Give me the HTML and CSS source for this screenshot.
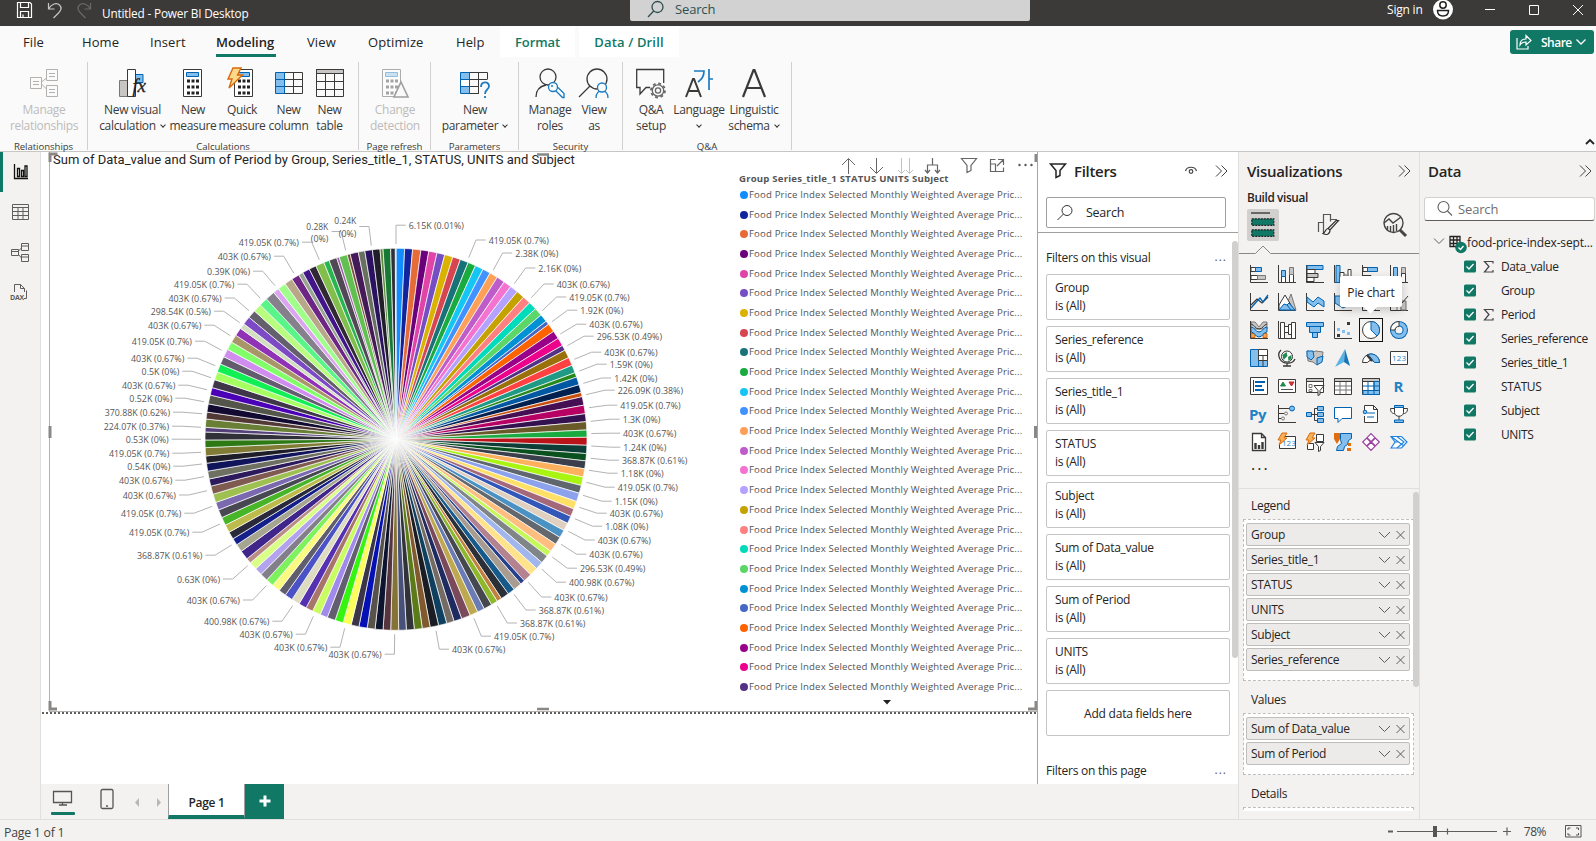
FILE: index.html
```html
<!DOCTYPE html>
<html lang="en">
<head>
<meta charset="utf-8">
<title>Untitled - Power BI Desktop</title>
<link rel="stylesheet" href="styles.css">
</head>
<body>
<header class="titlebar">
  <svg class="quick-icons" width="82" height="26" fill="none" stroke="#fff" stroke-width="1.2">
    <path d="M1.5 2.5h12.500l1.500 1.500v13.500h-14zM4.500 2.500v5h8v-5M4.500 17.500v-6h8v6M7 14.500v3"/>
    <path stroke="#c8c6c4" d="M32.500 3v6h6M32.500 9c3-5 8-7 11-4s1 6-1 8l-5 5"/>
    <path stroke="#6b6967" d="M74.500 3v6h-6M74.500 9c-3-5-8-7-11-4s-1 6 1 8l5 5"/>
  </svg>
  <span class="app-title">Untitled - Power BI Desktop</span>
  <div class="global-search">
    <svg width="17" height="19" fill="none" stroke="#2f4f4f" stroke-width="1.300"><circle cx="10.500" cy="7" r="5.500"/><path d="M6.700 11L1 17"/></svg>
    <span>Search</span>
  </div>
  <span class="signin">Sign in</span>
  <svg class="avatar" width="20" height="26"><circle cx="10" cy="9.500" r="10" fill="#fff"/><circle cx="10" cy="5" r="3.200" fill="none" stroke="#222" stroke-width="1.500"/><path d="M4.500 10.500h11c0 4-2.500 5.500-5.500 5.500s-5.500-1.500-5.500-5.500z" fill="none" stroke="#222" stroke-width="1.500"/></svg>
  <svg class="window-buttons" width="100" height="26" fill="none" stroke="#fff"><path d="M1 9.500h10M45.500 5.500h9v9h-9zM89 5l10 10M99 5l-10 10"/></svg>
</header>

<nav class="tabs">
  <span class="tab" style="width:40px">File</span>
  <span class="tab" style="width:72px">Home</span>
  <span class="tab" style="width:61px">Insert</span>
  <span class="tab active" style="width:97px">Modeling</span>
  <span class="tab" style="width:55px">View</span>
  <span class="tab" style="width:92px">Optimize</span>
  <span class="tab" style="width:55px">Help</span>
  <span class="tab contextual format">Format</span>
  <span class="tab contextual drill">Data / Drill</span>
  <button class="share"><svg width="16" height="16" fill="none" stroke="#fff" stroke-width="1.200"><path d="M1 4v11h11v-3M4 11c0-5 3-6 6-6V1.500l5 5-5 4.500V8C7.500 8 5.500 8.500 4 11z"/></svg><span>Share</span><svg width="10" height="6" fill="none" stroke="#fff" stroke-width="1.300"><path d="M.5.5L5 5 9.500.5"/></svg></button>
</nav>

<section class="ribbon">
  <div class="group" style="width:88px">
    <div class="commands">
      <div class="cmd off" style="width:88px"><svg width="30" height="30" fill="none" stroke="#b3b0ad"><path d="M1.500 9.500h11v11h-11zM17.500 1.500h11v11h-11zM17.500 17.500h11v11h-11zM4 13.500h6M4 16.500h6M20 5.500h6M20 8.500h6M20 21.500h6M20 24.500h6M12.500 14l5-4M12.500 16l5 5"/></svg><span>Manage</span><span>relationships</span></div>
    </div><div class="group-name">Relationships</div>
  </div>
  <div class="group" style="width:271px">
    <div class="commands calc">
      <div class="cmd" style="width:71px"><svg width="30" height="30"><path d="M1.500 12.500h8v16h-8z" fill="#c8c6c4" stroke="#777"/><path d="M17 6.500h8v8h-8z" fill="#83beec" stroke="#0063b1"/><path d="M9.500 1.500h8v27h-8z" fill="#fff" stroke="#3b3a39"/><text x="14.500" y="24" class="fx">fx</text></svg><span>New visual</span><span>calculation<i class="caret"></i></span></div>
      <div class="cmd" style="width:50px"><svg width="20" height="30"><use href="#calculator"/></svg><span>New</span><span>measure</span></div>
      <div class="cmd" style="width:48px"><svg width="30" height="30"><use href="#calculator" x="7"/><path d="M6 0h8l-3.500 7h5L2 20l3-9H1z" fill="#fcd98a" stroke="#d96a0b" stroke-width="1.400"/></svg><span>Quick</span><span>measure</span></div>
      <div class="cmd" style="width:45px"><svg width="30" height="30" fill="none"><path d="M1.500 4.500h9v21h-9z" fill="#83beec"/><path d="M10 4.500h18.500v21H10M10 11.500h18M10 18.500h18M19.500 4.500v21" stroke="#3b3a39"/><path d="M1.500 4.500h9v21h-9zM1.500 11.500h9M1.500 18.500h9" stroke="#0063b1"/></svg><span>New</span><span>column</span></div>
      <div class="cmd" style="width:37px"><svg width="30" height="30" fill="none" stroke="#3b3a39"><path d="M1.500 1.500h27v4h-27z" fill="#c8c6c4"/><path d="M1.500 1.500h27v27h-27zM1.500 13.500h27M1.500 21.500h27M10.500 5.500v23M19.500 5.500v23"/></svg><span>New</span><span>table</span></div>
    </div><div class="group-name">Calculations</div>
  </div>
  <div class="group" style="width:72px">
    <div class="commands">
      <div class="cmd off" style="width:72px"><svg width="26" height="30"><g opacity=".4"><use href="#calculator"/></g><path d="M19 14l7 15H12z" fill="#fafafa" stroke="#a19f9d" stroke-width="1.600"/></svg><span>Change</span><span>detection</span></div>
    </div><div class="group-name">Page refresh</div>
  </div>
  <div class="group" style="width:88px">
    <div class="commands">
      <div class="cmd" style="width:88px"><svg width="30" height="30" fill="none"><path d="M.5 4.500h9v21h-9z" fill="#83beec"/><path d="M9 4.500h18.500v7M9 11.500h18M9 18.500h9M9 25.500h10M18.500 4.500v21" stroke="#3b3a39"/><path fill="#fff" d="M1 12h8v6H1z"/><path d="M.5 4.500h9v21h-9zM.5 11.500h9M.5 18.500h9" stroke="#0063b1"/><path d="M21 19c0-6 8-6 8-1 0 4-4 3-4 8M25 28v2" stroke="#1a7bc0" stroke-width="1.800"/></svg><span>New</span><span>parameter<i class="caret"></i></span></div>
    </div><div class="group-name">Parameters</div>
  </div>
  <div class="group" style="width:104px">
    <div class="commands security">
      <div class="cmd" style="width:48px"><svg width="30" height="30" fill="none" stroke="#3b3a39" stroke-width="1.300"><circle cx="13" cy="9" r="8"/><path d="M1 29c0-8 5-11 10-12"/><g stroke="#1a7bc0" fill="#fafafa"><path d="M20.500 22.500l7 7h1.500v-4l-6-6"/><circle cx="18" cy="19" r="4.500"/></g><circle cx="17" cy="18" r="1" fill="#1a7bc0" stroke="none"/></svg><span>Manage</span><span>roles</span></div>
      <div class="cmd" style="width:40px"><svg width="32" height="30" fill="none" stroke="#3b3a39" stroke-width="1.300"><circle cx="19" cy="11" r="10"/><path d="M12 18L1 29"/><g stroke="#1a7bc0" fill="#fafafa"><path d="M18 30c0-10 12-10 12 0"/><circle cx="24" cy="19.500" r="4.500"/></g></svg><span>View</span><span>as</span></div>
    </div><div class="group-name">Security</div>
  </div>
  <div class="group" style="width:169px">
    <div class="commands qna">
      <div class="cmd" style="width:46px"><svg width="30" height="30" fill="none" stroke="#3b3a39" stroke-width="1.300"><path d="M14 19.500l-4 0-6 6.500v-6.500H.7V1.500h27V15"/><circle cx="22" cy="22.500" r="2.600" stroke="#666"/><circle cx="22" cy="22.500" r="5.700" stroke="#666"/><circle cx="22" cy="22.500" r="7" stroke="#666" stroke-dasharray="2.800 2.700" stroke-width="1.800"/></svg><span>Q&amp;A</span><span>setup</span></div>
      <div class="cmd" style="width:50px"><svg width="30" height="30" fill="none" stroke-width="1.700"><path d="M2 29L9 11h1l7 18M5 23h9" stroke="#3b3a39" stroke-width="2"/><path d="M10 3h10c0 6-3 9-6 11M25 1v21M25 11h4" stroke="#1a7bc0"/></svg><span>Language</span><span><i class="caret solo"></i></span></div>
      <div class="cmd" style="width:60px"><svg width="26" height="30" fill="none" stroke="#3b3a39" stroke-width="2.200"><path d="M2 29L12.500 2h1L24 29M6 20h14"/></svg><span>Linguistic</span><span>schema<i class="caret"></i></span></div>
    </div><div class="group-name">Q&amp;A</div>
  </div>
  <svg class="collapse" width="10" height="7" fill="none" stroke="#222" stroke-width="1.800"><path d="M1 6l4-4 4 4"/></svg>
</section>

<main class="workspace">
  <aside class="rail">
    <div class="rail-item current"><svg width="16" height="16" fill="none" stroke="#111" stroke-width="1.300"><path d="M1.500 0v14.500H15M4.500 4.500h2v8h-2zM8.500 6.500h2v6h-2zM12 2h2v10.500h-2z"/></svg></div>
    <div class="rail-item"><svg width="17" height="16" fill="none" stroke="#605e5c"><path d="M.5.5h16v15H.5zM.5 3.500h16M.5 7.500h16M.5 11.500h16M6 3.500v12M11 3.500v12"/></svg></div>
    <div class="rail-item"><svg width="19" height="19" fill="none" stroke="#605e5c"><path d="M.5 6.500h7v6h-7zM10.500.5h7v7h-7zM10.500 11.500h7v7h-7zM.5 8.500h7M10.500 3h7M10.500 14h7M7.500 8l3-3M7.500 11.500L10.500 15"/></svg></div>
    <div class="rail-item"><svg width="20" height="17" fill="none" stroke="#605e5c"><path d="M4.500 8V.5h6l4 4V8M10.500.5v4h4M14 14.500h2.500V6.500"/><text x="0" y="15.500" class="dax">DAX</text></svg></div>
  </aside>

  <section class="stage">
    <div class="page">
      <div class="visual">
        <svg id="pie" class="pie" width="685" height="558" viewBox="50 153 685 558"></svg>
        <div class="legend"><div class="legend-title">Group Series_title_1 STATUS UNITS Subject</div><div id="legend-rows"></div></div>
        <div class="visual-title">Sum of Data_value and Sum of Period by Group, Series_title_1, STATUS, UNITS and Subject</div>
        <svg class="visual-header" width="204" height="23" fill="none" stroke="#666"><path d="M14.500 21V6M8 12l6.500-6.500L21 12M42.500 5v15M36 14l6.500 6.500L49 14"/><path stroke="#c4c2c0" d="M67.500 5v15M64 17l3.500 3.500L71 17M75.500 5v15M72 17l3.500 3.500L79 17"/><path d="M98.500 5v7M93.500 20v-8h10v8M91 17l2.500 3 2.500-3M101 17l2.500 3 2.500-3M127.500 5.500h15l-5.500 7v5l-4 2v-7zM156.500 11v7.500h13v-4M156.500 11h5v7M156.500 11V6.500h5M164 6.500h5.500V12M169 7l-6 6" stroke-width="1.200"/><g fill="#555" stroke="none"><circle cx="185.500" cy="12" r="1.200"/><circle cx="191.500" cy="12" r="1.200"/><circle cx="197.500" cy="12" r="1.200"/></g></svg>
        <svg class="more-below" width="8" height="5"><path d="M0 0h8L4 4.500z" fill="#222"/></svg>
        <svg class="handles" width="990" height="561" fill="none" stroke="#8a8886" stroke-width="3"><path d="M9.500 2H2v8M2 549v8h7M980 557h8v-8M988 2v8M2 274v12M987.500 274v12"/><path d="M489 2.500h12M489 557h12" stroke-width="2.500"/></svg>
      </div>
    </div>
    <div class="pagebar">
      <svg class="device" width="110" height="35" fill="none" stroke="#555" stroke-width="1.300"><path d="M12.500 7.500h18v11h-18zM18 21h8M21.500 18v3"/><rect x="60" y="5.500" width="12" height="19" rx="1.500"/><path d="M65 22h2"/></svg>
      <svg class="nav-arrows" width="30" height="10" fill="#b9b7b5"><path d="M5 1v9L1 5.500zM23 1v9l4-4.500z"/></svg>
      <div class="page-tab">Page 1</div>
      <div class="add-page"><svg width="12" height="12" stroke="#fff" stroke-width="3"><path d="M6 .5v11M.5 6h11"/></svg></div>
    </div>
  </section>

  <aside class="filters">
    <div class="filters-body">
      <div class="pane-head"><svg width="18" height="16" fill="none" stroke="#252423" stroke-width="1.500"><path d="M.5 1h15l-5.500 6.500v5L6 14.500v-7z"/></svg><b>Filters</b><svg class="eye" width="12" height="9" fill="none" stroke="#444" stroke-width="1.200"><path d="M.5 5C2 0 10 0 11.500 5"/><circle cx="6" cy="5.500" r="1.800"/></svg><svg width="13" height="12" fill="none" stroke="#444"><path d="M1 .5L6.500 6 1 11.500M6.500.5L12 6l-5.500 5.500"/></svg></div>
      <div class="filter-search"><svg width="16" height="16" fill="none" stroke="#333"><circle cx="10" cy="5.500" r="5"/><path d="M6.500 9L.5 15"/></svg><span>Search</span></div>
      <div class="filter-section"><span>Filters on this visual</span><span class="dots">...</span></div>
      <div id="filter-cards" class="cards"></div>
      <div class="filter-section last"><span>Filters on this page</span><span class="dots">...</span></div>
      <div class="scroll-thumb"></div>
    </div>
  </aside>

  <aside class="viz">
    <div class="pane-head"><b>Visualizations</b><svg width="13" height="12" fill="none" stroke="#444"><path d="M1 .5L6.500 6 1 11.500M6.500.5L12 6l-5.500 5.500"/></svg></div>
    <div class="build-label">Build visual</div>
    <div class="modes">
      <div class="mode selected"><svg width="24" height="26" fill="#117865"><path d="M0 1h19" stroke="#222" stroke-width="1.200"/><path d="M.8 6.800h22v6.500h-22zM.8 17.800h22v6.500h-22z" stroke="#222" stroke-width="1.200" stroke-dasharray="2 1"/></svg></div>
      <div class="mode"><svg width="24" height="26" fill="none" stroke="#555" stroke-width="1.200"><path d="M1.500 20V10.500h5V22M6.500 14V2.500h7v7M13.500 7.500h6v2"/><path d="M21.500 8.500L13 18l-2-1.500 8-8zM11 16.500c-3 0-2 4-5 5 3 2 7 1 7-3.500" fill="#f3f2f1" stroke="#333"/></svg></div>
      <div class="mode"><svg width="26" height="26" fill="none" stroke="#444" stroke-width="1.400"><circle cx="11.500" cy="11" r="9.500"/><path d="M2 11l5-4 4 4 8-6M5.500 18v-4M8.500 20v-6M11.500 20v-7M14.500 19v-7"/><path d="M18 18l6 6" stroke-width="3"/></svg></div>
    </div>
    <svg class="notch" width="180" height="9" fill="none" stroke="#8a8886"><path d="M0 8.500h16.500L24 1l7.500 7.500H180"/></svg>
    <div id="gallery" class="gallery"></div>
    <div class="gallery-more">...</div>
    <div class="tooltip">Pie chart</div>
    <div class="wells">
      <div class="well-name">Legend</div>
      <div class="well" id="well-legend"></div>
      <div class="well-name">Values</div>
      <div class="well" id="well-values"></div>
      <div class="well-name">Details</div>
      <div class="well empty"></div>
      <div class="scroll-thumb"></div>
    </div>
  </aside>

  <aside class="data">
    <div class="pane-head"><b>Data</b><svg width="13" height="12" fill="none" stroke="#444"><path d="M1 .5L6.500 6 1 11.500M6.500.5L12 6l-5.500 5.500"/></svg></div>
    <div class="data-search"><svg width="16" height="16" fill="none" stroke="#605e5c" stroke-width="1.100"><circle cx="6.500" cy="6" r="5.500"/><path d="M10.500 10l4.500 4.500"/></svg><span>Search</span></div>
    <div class="table-row"><svg width="32" height="20" fill="none" stroke="#605e5c"><path d="M1 5.500l5 5 5-5"/><path stroke="#252423" stroke-width="1.300" d="M17 3.500h10v10H17zM20.500 3.500v10M24 3.500v10M17 7h10M17 10.500h10"/><circle cx="28" cy="14.500" r="5.800" fill="#117865" stroke="none"/><path d="M25.500 14.500l2 2 3-3.500" stroke="#fff" stroke-width="1.300"/></svg><span>food-price-index-sept...</span></div>
    <div id="fields"></div>
  </aside>
</main>

<footer class="statusbar">
  <span>Page 1 of 1</span>
  <svg class="zoom" width="126" height="18" fill="none" stroke="#605e5c"><path d="M1 9.500h5" stroke-width="2"/><path d="M10 9.500h100M60.500 6.500v6M116 9.500h8M120 5.500v8" stroke-width="1.200"/><path d="M46 4h4v11h-4z" fill="#555" stroke="none"/></svg>
  <span class="percent">78%</span>
  <svg width="17" height="14" fill="none" stroke="#555"><path d="M.5 1.500h15.500v11.500H.5zM3 6V4h2.500M11 4h2.500v2M13.500 9v2H11M5.500 11H3V9"/></svg>
</footer>

<svg class="defs" width="0" height="0"><defs><g id="calculator"><path d="M.5 1.500h18v27h-18z" fill="#fff" stroke="#3b3a39"/><path d="M3.500 4.500h12v4h-12z" fill="#83beec" stroke="#0063b1"/><path d="M4 13h12M4 19h12M4 25h12" stroke="#222" stroke-width="3" stroke-dasharray="3 1.500"/></g></defs></svg>
<script src="app.js"></script>
</body>
</html>
```
FILE: styles.css
```css
* { box-sizing: border-box; }
body { margin: 0; width: 1596px; height: 841px; overflow: hidden; display: flex; flex-direction: column; font: 12px/16px "Open Sans", "Noto Sans", sans-serif; letter-spacing: -.3px; color: #252423; background: #f3f2f1; }
svg { display: block; flex: none; overflow: visible; }
.defs { position: absolute; }
b { font-weight: 600; }

.titlebar { height: 26px; flex: none; background: #3b3a38; color: #fff; display: flex; align-items: center; }
.quick-icons { margin-left: 16px; }
.app-title { margin-left: 4px; width: 528px; font-size: 11.800px; letter-spacing: -.18px; padding-bottom: 1px; }
.global-search { width: 400px; height: 21px; align-self: flex-start; background: #d2d2d2; border-radius: 0 0 2px 2px; color: #2f5050; display: flex; align-items: flex-start; padding-left: 17px; gap: 11px; font-size: 13px; line-height: 19px; letter-spacing: -.15px; }
.signin { margin-left: 357px; width: 36px; line-height: 20px; align-self: flex-start; white-space: nowrap; letter-spacing: -.2px; }
.avatar { margin-left: 10px; }
.window-buttons { margin-left: 31px; }

.tabs { height: 31px; flex: none; background: #fafafa; display: flex; font-size: 13px; line-height: 33px; padding-left: 23px; }
.tab { flex: none; white-space: nowrap; letter-spacing: .1px; }
.tab:nth-child(1) { margin-right: 19px; }
.tab:nth-child(2) { margin-right: -4px; }
.tab:nth-child(3) { margin-right: 5px; }
.tab:nth-child(4) { margin-right: -6px; }
.tab:nth-child(5) { margin-right: 6px; }
.tab:nth-child(6) { margin-right: -4px; }
.tab:nth-child(7) { margin-right: -11px; }
.tab.active { font-weight: 600; letter-spacing: 0; position: relative; }
.tab.active::after { content: ""; position: absolute; left: 0; bottom: 0; width: 60px; height: 3px; background: #117865; }
.contextual { background: #fff; color: #117865; font-weight: 600; text-align: center; letter-spacing: -.1px; }
.format { width: 75px; margin-right: 4px; }
.drill { width: 100px; letter-spacing: .15px; }
.share { margin: 4px 2px 0 auto; width: 84px; height: 24px; border: 0; border-radius: 3px; background: #117865; color: #fff; display: flex; align-items: center; padding: 0 8px 0 6px; font: 600 12px/24px "Open Sans", sans-serif; letter-spacing: -.5px; }
.share span { margin: 1px auto 0 9px; }

.ribbon { height: 95px; flex: none; background: #fafafa; display: flex; padding-top: 5px; border-bottom: 1px solid #c8c6c4; position: relative; z-index: 2; }
.group { flex: none; border-right: 1px solid #d2d0ce; height: 88px; position: relative; }
.commands { display: flex; height: 76px; padding-top: 6px; }
.calc { padding-left: 9px; }
.security { padding-left: 7px; }
.qna { padding-left: 5px; }
.cmd { flex: none; display: flex; flex-direction: column; align-items: center; white-space: nowrap; color: #3b3a39; letter-spacing: -.32px; }
.cmd svg { margin-bottom: 4px; }
.cmd.off { color: #bdbbb9; }
.fx { font: italic 400 19px "Liberation Serif", serif; fill: #222; stroke: #222; stroke-width: .3; }
.caret { display: inline-block; width: 4px; height: 4px; border: solid #333; border-width: 0 1.500px 1.500px 0; transform: rotate(45deg); margin: 0 1px 3px 5px; }
.caret.solo { margin: 0 0 3px; }
.group-name { font-size: 9.600px; line-height: 15px; text-align: center; color: #3b3a39; letter-spacing: -.05px; padding-top: 1px; }
.collapse { position: absolute; right: 1px; bottom: 6px; }

.workspace { flex: 1; min-height: 0; display: flex; }
.rail { width: 41px; flex: none; border-right: 1px solid #e1dfdd; }
.rail-item { height: 40px; display: flex; align-items: center; justify-content: center; }
.rail-item.current { border-left: 3px solid #117865; padding-right: 2px; }
.dax { font: 700 7px "Open Sans", sans-serif; fill: #605e5c; stroke: none; }

.stage { width: 996px; flex: none; display: flex; flex-direction: column; }
.page { height: 632px; background: #fff; padding-left: 8px; position: relative; }
.page::after { content: ""; position: absolute; left: 1px; top: 560px; width: 995px; height: 2px; background: repeating-linear-gradient(90deg, #605e5c 0 2px, transparent 2px 4px); }
.visual { width: 989px; height: 560px; border-left: 1px solid #b3b0ad; border-bottom: 1px solid #b3b0ad; border-right: 1px solid #b3b0ad; position: relative; display: flex; padding-top: 1px; }
.visual-title { position: absolute; left: 3px; top: 0; font: 13px/16px Roboto, sans-serif; letter-spacing: .01px; white-space: nowrap; }
.slice { stroke: #fff; stroke-width: .7; }
.leader { fill: none; stroke: #b3b3b3; }
.label { font: 9px "Open Sans", sans-serif; letter-spacing: 0; fill: #555; }
.legend { padding-top: 18px; margin-left: 4px; width: 290px; color: #555; font-size: 9.600px; white-space: nowrap; letter-spacing: .16px; }
.legend-title { font-weight: 700; line-height: 15px; height: 14px; letter-spacing: .2px; }
.legend-row { height: 19.700px; display: flex; align-items: center; gap: 1px; }
.dot { width: 8px; height: 8px; border-radius: 50%; margin-left: 1px; }
.visual-header { position: absolute; left: 784px; top: 1px; background: #fff; }
.more-below { position: absolute; left: 833px; top: 548px; }
.handles { position: absolute; left: -2px; top: 0; }

.pagebar { height: 35px; display: flex; align-items: center; position: relative; }
.device { width: 92px; }
.pagebar::before { content: ""; position: absolute; left: 10px; top: 28px; width: 24px; height: 3px; background: #117865; border-radius: 1px; }
.nav-arrows { margin-left: 1px; }
.page-tab { width: 77px; height: 35px; margin-left: 4px; background: #fff; border-left: 1px solid #a19f9d; border-right: 1px solid #a19f9d; border-bottom: 4px solid #117865; font-weight: 600; text-align: center; line-height: 38px; letter-spacing: -.3px; }
.add-page { width: 39px; height: 35px; background: #117865; display: flex; align-items: center; justify-content: center; padding-bottom: 2px; }

.filters { width: 201px; flex: none; }
.filters-body { height: 632px; background: #fff; border-left: 1px solid #a6a4a2; position: relative; }
.pane-head { display: flex; align-items: center; height: 39px; padding-bottom: 2px; font-size: 15px; letter-spacing: -.3px; }
.pane-head > svg:last-child { margin-left: auto; }
.filters .pane-head { padding: 0 10px 2px 12px; }
.filters .pane-head b { margin-left: 6px; }
.filters .pane-head .eye { margin-left: auto; }
.filters .pane-head > svg:last-child { margin-left: 18px; }
.filter-search { margin: 6px 0 4px 8px; width: 180px; height: 31px; border: 1px solid #a19f9d; border-radius: 2px; display: flex; align-items: center; gap: 13px; padding-left: 10px; font-size: 12.500px; letter-spacing: -.25px; }
.filter-section { border-top: 1px solid #a19f9d; padding: 17px 11px 0 8px; height: 42px; display: flex; justify-content: space-between; letter-spacing: -.25px; }
.filter-section.last { border: 0; padding-top: 27px; }
.dots { line-height: 14px; letter-spacing: 1px; color: #605e5c; }
.cards { display: flex; flex-direction: column; gap: 6px; margin-left: 8px; width: 184px; }
.card { height: 46px; border: 1px solid #c8c6c4; border-radius: 2px; padding: 4px 0 0 8px; line-height: 18px; }
.card.add { text-align: center; padding: 0; line-height: 46px; letter-spacing: -.22px; }
.scroll-thumb { position: absolute; width: 6px; background: #d2d0ce; border-radius: 3px; }
.filters .scroll-thumb { right: 0; top: 89px; height: 417px; }

.viz { width: 182px; flex: none; border-left: 1px solid #e1dfdd; border-right: 1px solid #e1dfdd; position: relative; }
.viz .pane-head { padding: 0 8px 2px 8px; }
.build-label { padding-left: 8px; font-weight: 600; font-size: 11.800px; line-height: 14px; height: 19px; margin-top: -1px; letter-spacing: -.36px; }
.modes { display: flex; justify-content: space-between; padding: 0 8px; }
.mode { width: 32px; height: 32px; display: flex; align-items: center; justify-content: center; padding-bottom: 1px; }
.mode.selected { background: #d2d0ce; border-radius: 2px; }
.notch { margin-top: 4px; }
.gallery { display: grid; grid-template-columns: repeat(6, 28px); grid-auto-rows: 28px; padding: 6px 0 0 6px; }
.tile { display: flex; align-items: center; justify-content: center; width: 28px; height: 28px; }
.tile.current { width: 24px; height: 24px; margin: 2px; border: 1px solid #111; }
.glyph { font: 700 15px "Open Sans", sans-serif; fill: #1f83c4; }
.digits { font: 8px "Open Sans", sans-serif; fill: #1f83c4; letter-spacing: 0; }
.gallery-more { height: 31px; padding-left: 12px; font-size: 16px; line-height: 16px; letter-spacing: 2px; }
.tooltip { position: absolute; left: 101px; top: 124px; width: 62px; height: 31px; background: #fff; text-align: center; line-height: 34px; letter-spacing: -.2px; box-shadow: 0 3px 9px rgba(0,0,0,.2); border-radius: 2px; }
.tooltip::after { content: ""; position: absolute; left: 26px; top: 27px; width: 9px; height: 9px; background: #fff; transform: rotate(45deg); }
.wells { position: absolute; top: 336px; left: 0; right: 0; height: 323px; border-top: 1px solid #e1dfdd; overflow: hidden; }
.well-name { padding: 9px 0 0 12px; height: 30px; }
.well { margin: 0 5px 2px 4px; border: 1px dashed #c0bebc; background: #fff; padding: 3px 3px 7px 2px; }
.pill { height: 23px; margin-bottom: 2px; background: #edebe9; border: 1px solid #c0bebc; border-radius: 2px; display: flex; align-items: center; padding: 0 3px 0 4px; }
.pill svg { margin-left: auto; }
.well.empty { height: 20px; }
.wells .scroll-thumb { right: 0; top: 3px; height: 195px; }

.data { flex: 1; }
.data .pane-head { padding: 0 4px 2px 8px; }
.data-search { margin: 6px 1px 0 4px; height: 24px; background: #fff; border: 1px solid #d2d0ce; border-bottom-color: #605e5c; border-radius: 3px; display: flex; align-items: center; gap: 5px; padding-left: 12px; font-size: 13px; color: #707070; letter-spacing: -.15px; }
.table-row { height: 24px; margin: 10px 0 0 13px; display: flex; align-items: center; gap: 2px; white-space: nowrap; letter-spacing: -.15px; }
.field { height: 24px; display: flex; align-items: center; padding-left: 44px; letter-spacing: -.38px; }

.statusbar { height: 22px; flex: none; border-top: 1px solid #e1dfdd; display: flex; align-items: center; padding: 4px 14px 0 4px; color: #444; font-size: 12.300px; letter-spacing: -.25px; }
.statusbar svg { margin-top: -3px; }
.zoom { margin-left: auto; }
.percent { margin: -2px 19px 0 11px; font-size: 12px; letter-spacing: -.5px; }
```
FILE: app.js
```js
// Slices: colour and the clockwise end angle in degrees.
const slices = `118DFF 2.6,12239E 5,E66C37 7.500,6B007B 9.900,E044A7 12.400,744EC2 14.800,D9B300 17.300,D64550 19.700,197278 22.200,1AAB40 24.600,15C6F4 27.100,4092FF 29.500,FFA058 32,BE5DC9 34.500,F472D0 36.900,B5A1FF 39.400,C4A200 41.900,FF8080 44.400,00DBBC 46.900,5BD667 49.400,0091D5 51.800,4668C5 53,FF6300 55.600,99008A 58.100,EC008C 60.600,533285 62.200,99700A 64.700,FF4141 67.200,1F9A85 69.600,25891C 71,0057A2 73.400,002050 75.800,C94F0F 77.100,450F54 79.700,B60064 82.300,34124F 84.700,6A5A29 87.200,1AAB40 89.400,BA141A 91.800,0C3D37 94.300,0B511F 96.500,3A3F4B 98.900,FFB05C 101.400,A9F511 104,5F666D 106.400,8DA2EC 109,FFE066 111.400,A5677A 113.800,3257B8 116.100,DFD0C0 118.500,4A91C4 120.900,62686D 123.300,FFBD80 125.900,C5F95A 127.700,808588 130.200,A2B6EE 132.600,FFE38A 135.200,B5828F 137.800,26408B 139.200,A89C90 141.800,155A8A 144,2B3038 146.500,C08040 148,8CB82A 150,464850 152.500,6B7BB3 154.700,BEA950 157.200,7A4A5A 159.900,1E2A60 162.300,736B64 164.600,0F4060 167.100,1A1D24 169.700,80592F 172.100,5B7B18 174.500,323338 176.900,47517A 179.200,857236 181.600,56353F 183.900,0C1430 186.300,57534A 188.700,0510B5 191.200,3A3548 193.600,FCFC5C 196.100,35F510 198.600,625E70 201.100,A08BEC 203.400,C8FC60 205.900,A87668 208.100,5530B0 210.500,DEDCC0 213,4A52C5 215.400,605E6C 217.700,FAFA80 220.200,7DF25C 222.600,827F8A 225,B3A2EE 227.300,DAFF88 229.700,B98D85 231.300,40258A 234.100,A5A590 236.500,151F8A 238.600,2A2A3A 240.900,BCBB4C 243.300,48B528 245.800,484852 248.300,7B69B0 250.700,9DC050 253.300,7E5A50 255.800,2C1A5C 258,6E7062 260.400,10145A 262.800,1E1E28 265,807C35 267.500,2D7A15 269.800,303038 272.200,56427A 273.600,687F35 276.100,523935 278.200,120A30 280.700,53554A 283.400,4B00B5 285.700,40364A 288.200,A5FF60 290.700,10F055 293.200,635C6E 295.600,D08CEE 298.100,80FF68 300.600,A89668 303,9032B5 305.500,D2DEC0 307.200,7C4AC4 309.700,645F6C 312.200,B8FC80 314.700,5AF588 317.300,85808C 320.200,DBA5F0 322,A0FF8A 324.500,B8A888 327,6E2685 329.400,98A590 330.800,42158A 333,302835 335.200,82BE4C 337.800,28B550 339.500,504854 341.900,A060A8 342.700,62C050 345.200,7A5038 346.100,451A58 348.600,687060 350.600,2A1260 352.900,201E28 355.200,5A8A3A 356.100,187835 358.400,303038 359.800,118DFF 360`
  .split(',').map(s => s.split(' '));

// Callouts: text, text edge x, text centre y, rim x, rim y.
const right = `6.15K (0.01%)|408.7|225.700|396|244
419.05K (0.7%)|488.700|240.500|468.700|257.700
2.38K (0%)|515.300|253.500|493.300|270
2.16K (0%)|538.300|268.500|514.300|283.700
403K (0.67%)|556.700|284.500|531.300|297.700
419.05K (0.7%)|569.300|297.500|542.300|310.700
1.92K (0%)|580.300|310.700|552|321.700
403K (0.67%)|589.300|324.700|560.300|334
296.53K (0.49%)|596.700|336.700|567.300|345.700
403K (0.67%)|604.300|352.700|574.300|359.300
1.59K (0%)|609.700|364.700|579.300|371
1.42K (0%)|614.300|378.500|583.300|383.300
226.09K (0.38%)|617.700|390.700|586|394.700
419.05K (0.7%)|620.300|405.700|589|407.700
1.3K (0%)|622.700|419.700|590.700|421.300
403K (0.67%)|623|433.700|591.300|433.500
1.24K (0%)|623.300|447.700|591.300|446
368.87K (0.61%)|622|460.700|590.700|458.300
1.18K (0%)|620.700|473.700|589|470.300
419.05K (0.7%)|617.700|487.700|586.300|482.300
1.15K (0%)|614.700|501.700|583|495.300
403K (0.67%)|609.700|513.700|579.300|507.300
1.08K (0%)|605.300|526.700|574.700|518.700
403K (0.67%)|597.700|540.500|568.300|531.300
403K (0.67%)|589.300|554.700|561|544.300
296.53K (0.49%)|580|568.700|552.300|557
400.98K (0.67%)|569|582.700|542|569.300
403K (0.67%)|554.300|597.500|528.300|582.300
368.87K (0.61%)|538.700|610.500|514|594.300
368.87K (0.61%)|520|623.500|497.300|606
419.05K (0.7%)|494|636.700|474|618.300
403K (0.67%)|452|649.700|436|630.700`;
const left = `403K (0.67%)|381.700|654.700|394.700|634.300
403K (0.67%)|327.300|647.700|344.700|628.300
403K (0.67%)|292.700|634.700|313.300|616.300
400.98K (0.67%)|269.300|621.700|292.700|605.700
403K (0.67%)|240|600.500|266.300|585.700
0.63K (0%)|220|579.500|247.700|565.700
368.87K (0.61%)|202.300|555.700|231.700|545
419.05K (0.7%)|189.300|532.700|220|524
419.05K (0.7%)|181.300|513.700|212.300|506.300
403K (0.67%)|176|495.500|207|490.700
403K (0.67%)|172.300|480.700|204|476.700
0.54K (0%)|170.300|466.700|202|464
419.05K (0.7%)|169.300|453.700|201|452.300
0.53K (0%)|168.700|439.700|201|439.300
224.07K (0.37%)|169|426.700|201|427.300
370.88K (0.62%)|170|412.700|202|413.700
0.52K (0%)|172.300|398.700|204|401.700
403K (0.67%)|175.300|385.700|207|389.700
0.5K (0%)|179.300|371.700|211|377.700
403K (0.67%)|184.300|358.700|215.300|365.700
419.05K (0.7%)|192|341.700|221.700|350.300
403K (0.67%)|201.300|325.700|230.300|335.700
298.54K (0.5%)|211|311.700|239.700|322.700
403K (0.67%)|221.700|298.500|249|310.700
419.05K (0.7%)|234.300|284.700|260.300|298.300
0.39K (0%)|250|271.700|275|285.700
403K (0.67%)|271|256.700|293.700|273
419.05K (0.7%)|299|242.700|319.300|259.700`;

const widths = { 4: 17.5, 5: 22, 9: 37.700, 10: 43, 12: 53.300, 13: 55.300, 14: 60.300, 15: 65.300 };
const label = (t, x, y) => `<text class="label" x="${x}" y="${y + 3.3}" textLength="${widths[t.length]}" lengthAdjust="spacingAndGlyphs">${t}</text>`;
const cx = 396, cy = 439.3, r = 191;
const pt = a => { const t = a * Math.PI / 180; return `${(cx + r * Math.sin(t)).toFixed(2)} ${(cy - r * Math.cos(t)).toFixed(2)}`; };

let art = '', from = 0;
for (const [color, end] of slices) {
  art += `<path class="slice" fill="#${color}" d="M${cx} ${cy}L${pt(from)}A${r} ${r} 0 0 1 ${pt(+end)}z"/>`;
  from = +end;
}
for (const row of right.split('\n')) {
  const [t, ...n] = row.split('|'); const [x, y, rx, ry] = n.map(Number);
  art += `<path class="leader" d="M${rx} ${ry}L${x - 12.7} ${y - .5}H${x - 3}"/>` + label(t, x, y);
}
for (const row of left.split('\n')) {
  const [t, ...n] = row.split('|'); const [x, y, rx, ry] = n.map(Number);
  art += `<path class="leader" d="M${rx} ${ry}L${x + 12.7} ${y - .5}H${x + 3}"/>` + label(t, x - widths[t.length], y);
}
art += '<path class="leader" d="M331.700 231.500H341L345.700 250.300M359.300 226.500H369L371.300 245.700"/>';
art += label('0.28K', 306.3, 226.7) + label('(0%)', 310.8, 238.5) + label('0.24K', 334.3, 220.7) + label('(0%)', 338.8, 233.7);
document.getElementById('pie').innerHTML = art;

document.getElementById('legend-rows').innerHTML = slices.slice(0, 26).map(([c]) =>
  `<div class="legend-row"><i class="dot" style="background:#${c}"></i><span>Food Price Index Selected Monthly Weighted Average Pric...</span></div>`).join('');

document.getElementById('filter-cards').innerHTML =
  ['Group', 'Series_reference', 'Series_title_1', 'STATUS', 'Subject', 'Sum of Data_value', 'Sum of Period', 'UNITS']
    .map(n => `<div class="card"><div>${n}</div><div>is (All)</div></div>`).join('') + '<div class="card add">Add data fields here</div>';

const pill = n => `<div class="pill"><span>${n}</span><svg width="28" height="10" fill="none" stroke="#605e5c"><path d="M1 2l5.500 5.500L12 2M18.500 1l8 8M26.500 1l-8 8"/></svg></div>`;
document.getElementById('well-legend').innerHTML = ['Group', 'Series_title_1', 'STATUS', 'UNITS', 'Subject', 'Series_reference'].map(pill).join('');
document.getElementById('well-values').innerHTML = ['Sum of Data_value', 'Sum of Period'].map(pill).join('');

document.getElementById('fields').innerHTML =
  ['+Data_value', 'Group', '+Period', 'Series_reference', 'Series_title_1', 'STATUS', 'Subject', 'UNITS'].map(n => {
    const sum = n[0] === '+';
    return `<div class="field"><svg width="37" height="14" fill="none"><rect y=".5" width="12" height="12" rx="1.500" fill="#117865"/><path d="M2.500 6.500l2.500 2.500 4.500-5" stroke="#fff" stroke-width="1.300"/>${sum ? '<path d="M29 3.500V1.500h-8.500L25 6.500l-4.500 5.500H29v-2" stroke="#444" stroke-width="1.200"/>' : ''}</svg><span>${sum ? n.slice(1) : n}</span></div>`;
  }).join('');

// Gallery icons, 18 x 18.
const D = '#3b3a39', B = '#0063b1', L = '#83beec', G = '#c8c6c4';
const p = (d, s = D, f = 'none', w = 1) => `<path d="${d}" stroke="${s}" fill="${f}" stroke-width="${w}"/>`;
const axis = p('M.5 0v17.500H18');
const icons = [
  axis + p('M1 2.500h5v4H1zM1 10.500h8v4H1z', D, '#fff') + p('M5.500 2.500h6v4h-6z', B, L) + p('M7.500 10.500h8v4h-8z', '#777', G),
  axis + p('M3.500 11.500h4v6h-4zM11.500 9.500h4v8h-4z', D, '#fff') + p('M3.500 5.500h4v6h-4z', B, L) + p('M11.500 2.500h4v7h-4z', '#777', G),
  axis + p('M1 .5h16v4H1z', B, L) + p('M1 4.500h8v4H1zM1 12.500h7v4H1z', D, '#fff') + p('M1 8.500h11v4H1z', D, G),
  axis + p('M2 .5h4v17H2z', B, L) + p('M6 7.500h4v10H6zM14 4.500h3v13h-3z', D, '#fff') + p('M10 10h4v7h-4z', '#777', G),
  axis + p('M1 2.500h5v4H1zM1 10.500h8v4H1z', D, '#fff') + p('M5.500 2.500h10v4h-10z', B, L),
  axis + p('M3.500 2.500h4v14h-4z', B, L) + p('M11.500 2.500h4v6h-4z', '#777', G) + p('M11.500 8.500h4v9h-4z', D, '#fff'),
  axis + p('M1 12l6-6 5 4 6-6', D, 'none', 1.3) + p('M1 15l7-8 2-2 3 4 5-7', B, 'none', 1.3),
  axis + p('M8 13l5-12 5 16H8z', '#777', G) + p('M1 12l6-10 9 15H1z', D, '#fff') + p('M1 17l5-6 3 1 5 5z', B, L) + p('M9 12l2-2 6 7h-4z', B, L),
  axis + p('M1 4l6 5 5-5 6 4v6l-6-4-4 4-7-5z', B, L),
  axis + p('M1 3h16v8l-8 4-8-5z', B, L),
  axis + p('M2 8h4v9M9 5h4v12', D),
  axis + p('M3 12h4v5M7 8h4v9', '#777') + p('M11 8h5v9h-5z', '#777', G) + p('M2 10l6-4 4 4 6-7', D),
  p('M1 1h4l4 5 4-5h4v7H1z', '#777', G) + p('M1 12.500h4v4H1zM13 12.500h4v4h-4zM5 14.500l4-4 4 4', '#d96a0b', '#f5a552') + p('M1 6c4 0 4 5 8 5s4-5 8-5v5c-4 0-4 5-8 5s-4-5-8-5z', B, L) + p('M1 3c4 1 4 5 8 5s4-4 8-5', D) + axis,
  axis + p('M2.500 1.500h4v16h-4z', D, '#fff') + p('M6.500 5.500h4v6h-4zM10.500 3.500h3v10h-3z', D, '#fff') + p('M13.500 1.500h4v16h-4z', D, '#fff'),
  p('M.5 1.500h17v4H.5zM3.500 5.500h11v6h-11zM6.500 11.500h5v5h-5z', B, L),
  axis + p('M3 7h3v3H3zM8 9h3v3H8zM13 11h3v3h-3z', 'none', L) + p('M13 1h3v3h-3zM3 13h3v3H3z', 'none', D),
  `<circle cx="9" cy="9" r="8.500" fill="#fff" stroke="${D}"/>` + p('M9 9V.5A8.500 8.500 0 0 1 15 15z', B, L),
  `<circle cx="9" cy="9" r="6.300" fill="none" stroke="${B}" stroke-width="5.500"/><circle cx="9" cy="9" r="6.300" fill="none" stroke="${L}" stroke-width="3.500"/>` + p('M.5 9A8.500 8.500 0 0 1 9 .5v5A3.500 3.500 0 0 0 5 9z', D, '#fff'),
  p('M.5.5h8v17h-8zM8.500 11.500h9v6h-9z', B, L) + p('M8.500.5h9v11h-9zM8.500 6.500h9M13 6.500v11', D, '#fff'),
  `<circle cx="9" cy="7.500" r="5.500" fill="#fff" stroke="${D}"/>` + p('M4.500 6l4-3 1 4-4 4zM10 8l3.500-2v4l-3 2z', 'none', '#218a50') + p('M3 1c-5 5-1 14 8 13 3 0 5-2 6-4M9 14v3M5 17h8', D, 'none', 1.3),
  p('M1 2l5 1 4-1 7 1-1 8-5 5-4-3-5-1z', '#777', G) + p('M1 2h6l1 6-3 3-4-3zM11 9l6-2-1 6-5 3z', B, L),
  p('M11 0L1 18l9-5z', 'none', '#5bb3e6') + p('M11 0l5 17-6-4z', 'none', '#1676b8'),
  p('M.5 13.500a8.500 8.500 0 0 1 17 0h-5a4 4 0 0 0-7 0z', D, '#fff') + p('M6 5.500a8.500 8.500 0 0 1 11.500 8h-5L9 9z', B, L) + p('M5 6l5 6', D, 'none', 2),
  p('M.5 2.500h17v13H.5z', D, '#fff') + '<text class="digits" x="2" y="12" textLength="14">123</text>',
  p('M.5.5h17v17H.5z', D, '#fff') + p('M3.500 3v12', D) + p('M5 5h10M5 9h7M5 13h9', B, 'none', 2),
  p('M.5 2.500h17v13H.5z', D, '#fff') + p('M2.500 9l2.500-4 2.500 4z', '#218a50', '#218a50') + p('M11 5h5l-2.500 4z', '#c8282d', '#d13438') + p('M3 12.500h12', '#555'),
  p('M.5 1.500h17v14H.5z', D, '#fff') + p('M.5 1.500h17v3H.5z', D, G) + p('M3 7.500h3v3H3zM3 12.500h3v2H3z', '#777') + p('M8 8.500h10l-4 5v4l-2 1v-5z', D, '#fff'),
  p('M.5 1.500h17v16H.5z', D, '#fff') + p('M.5 1.500h17v3H.5z', D, G) + p('M1 9h16M1 13h16M6 5v12M12 5v12', '#777'),
  p('M.5 1.500h17v16H.5z', D, '#fff') + p('M.5 1.500h17v3H.5z', D, G) + p('M12 4.500h5.500v13H1v-4h11z', B, L) + p('M1 9h16M1 13.500h16M6 5v12M12 5v12', B),
  '<text class="glyph" x="3.500" y="14.500">R</text>',
  '<text class="glyph" x="-1" y="14.500">Py</text>',
  axis + p('M1 3.500h11M1 8.500h5M1 13.500h2', D) + `<circle cx="14" cy="3.500" r="2.500" fill="${L}" stroke="${B}"/><circle cx="8" cy="8.500" r="1.500" fill="none" stroke="#777"/><circle cx="5" cy="13.500" r="1.500" fill="none" stroke="#777"/>` ,
  p('M.5 7.500h5v4h-5zM11.500 1.500h6v4h-6zM11.500 7.500h6v4h-6zM11.500 13.500h6v4h-6z', B, L) + p('M5.500 9.500h6M8.500 9.500v-6h3M8.500 9.500v6h3', D),
  p('M.5 2.500h17v11H8l-4 4v-4H.5z', B, '#fff'),
  p('M2.500 5V.5h9l4 4v13h-13V11M11.500.5v4h4', D, '#fff') + p('M5 8h8M5 12h7', B) + `<circle cx="3" cy="7" r="1.800" fill="${L}" stroke="${B}"/>`,
  p('M4.500 1.500h9v6c0 5-9 5-9 0zM4.500 3.500h-4c0 4 2 5 4 5M13.500 3.500h4c0 4-2 5-4 5M9 11v4', D, '#fff') + p('M4.500.5h9v2h-9zM4.500 15h9v2.500h-9z', B, L),
  p('M2.500.5h9l4 4v13h-13zM11.500.5v4h4', D, '#fff', 1.3) + p('M5.500 16v-6M9 16v-4M12.500 16V9', D, 'none', 2.4),
  p('M4.500 3.500h13v12h-16v-4', D, '#fff') + '<text class="digits" x="4" y="13">123</text>' + p('M4 0h5L6 5h3l-8 7 2-5H0z', '#d96a0b', '#f5b25a'),
  p('M10.500 1.500h7v7h-7zM1.500 10.500h6v6h-6z', D, '#fff') + p('M4 0h5L6 5h3l-8 7 2-5H0z', '#d96a0b', '#f5b25a') + p('M9 9.500h9l-3.500 4v4l-2 1v-5z', D, '#fff'),
  p('M6.500.5h11v5l-3 2-1 4-3 2-1 4h-7l1-4 4-3-1-4z', B, L) + p('M0 0h6v6l-3 5-3-5zM14 10h3v3h-3zM13 15h4v3h-4z', 'none', '#e06c10'),
  p('M9 .7l4 4-4 4-4-4zM4.700 5l4 4-4 4-4-4zM13.300 5l4 4-4 4-4-4zM9 9.300l4 4-4 4-4-4z', '#9a3f9f', '#fff', 1.2),
  p('M1 15l4-6-4-5.500h10.500l5.500 5.500-5.500 6z', '#1f83e0', '#fff', 1.2) + p('M1 3.500L14 13M5 9l4 0M7 3.500l7 5.500-7 6', '#1f83e0', 'none', 1.1),
];
document.getElementById('gallery').innerHTML = icons.map((c, i) =>
  `<div class="tile${i === 16 ? ' current' : ''}"><svg width="18" height="18">${c}</svg></div>`).join('');
```
